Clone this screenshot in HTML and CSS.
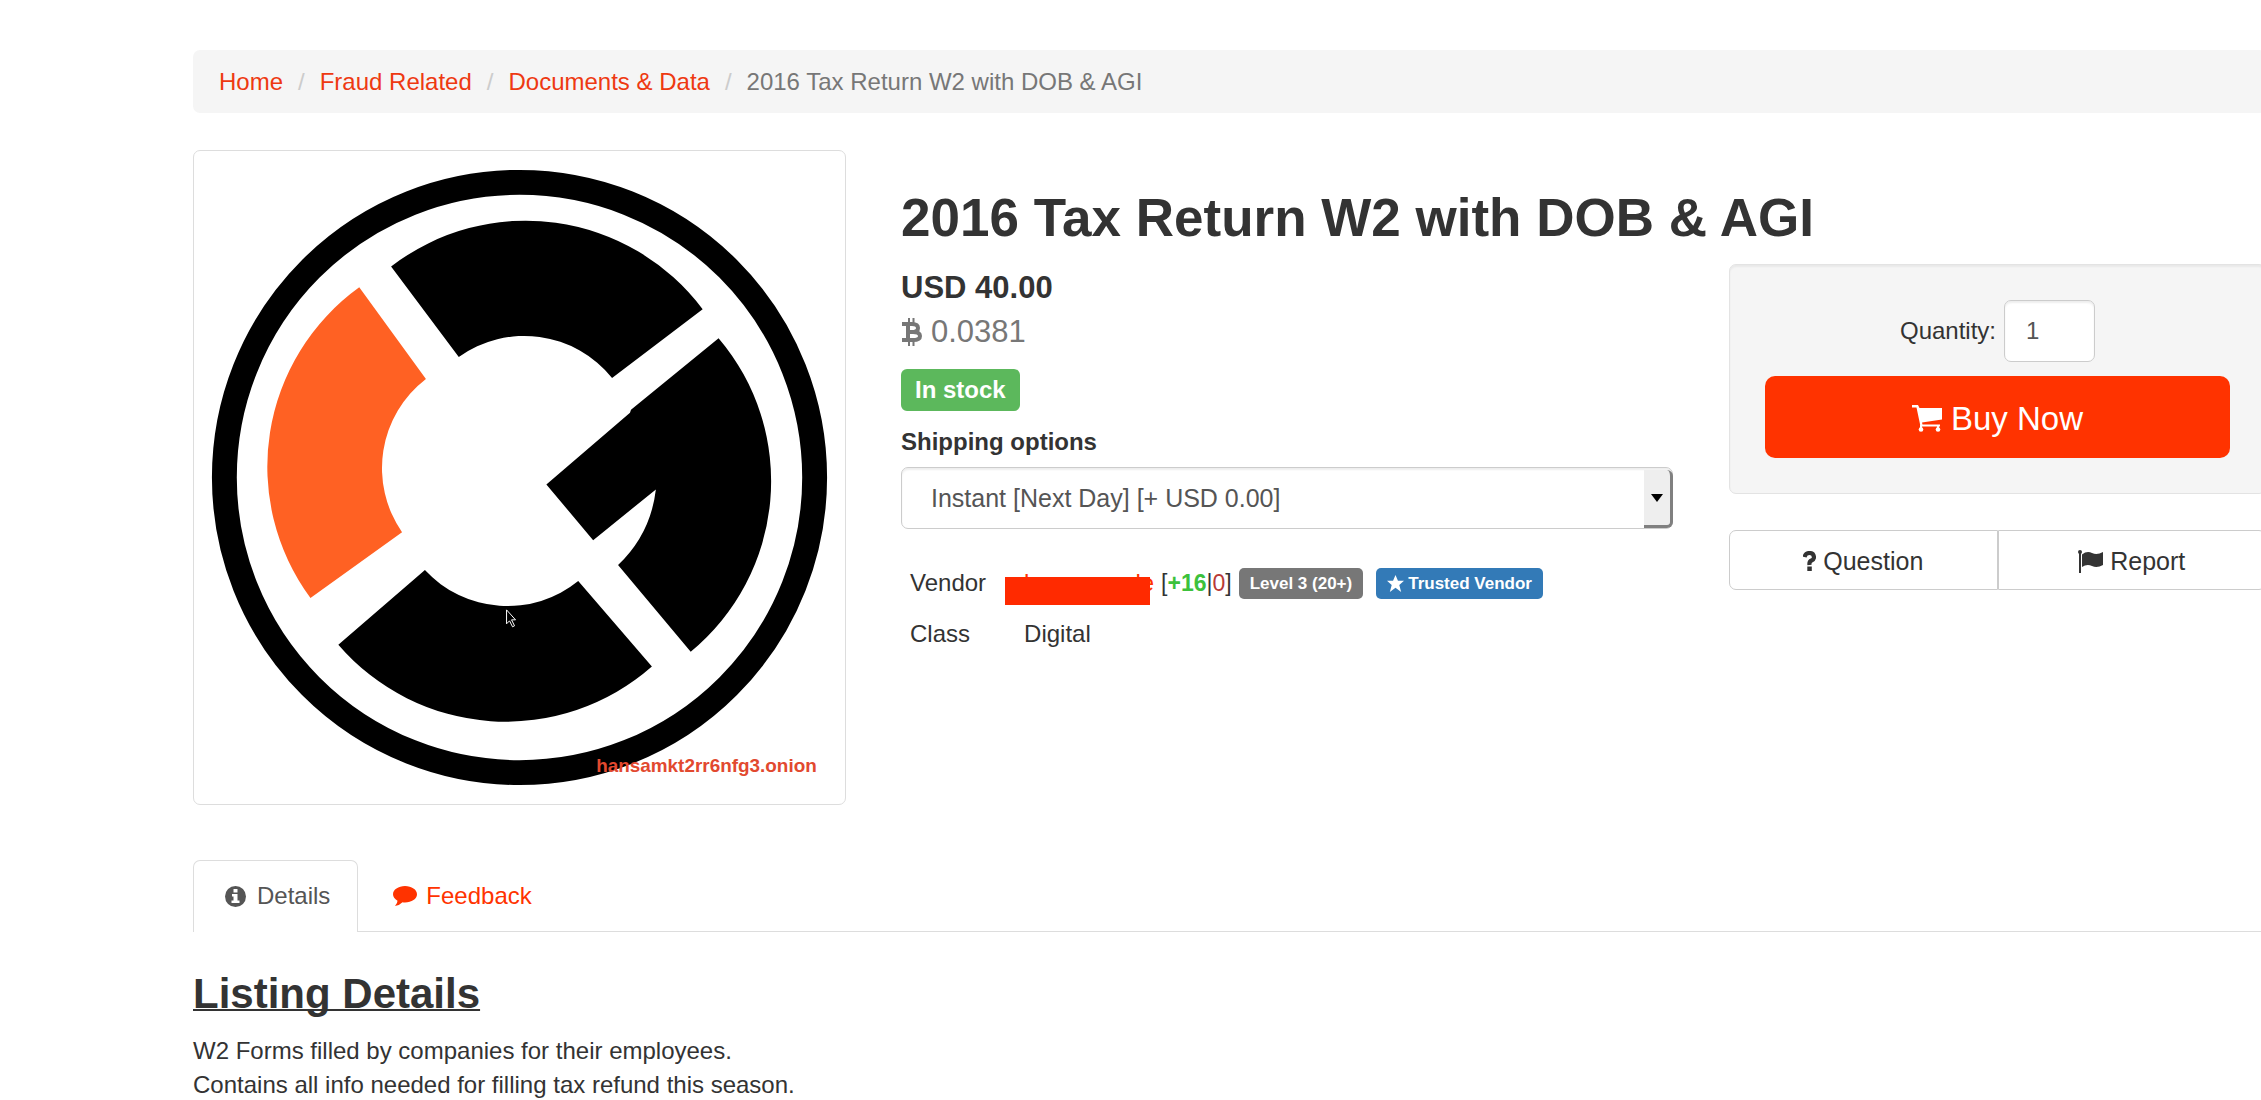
FILE: index.html
```html
<!DOCTYPE html>
<html lang="en">
<head>
<meta charset="utf-8">
<title>2016 Tax Return W2 with DOB &amp; AGI</title>
<link rel="stylesheet" href="styles.css">
</head>
<body>
<div class="container">
  <nav aria-label="Breadcrumb">
    <ol class="breadcrumb">
      <li><a href="#">Home</a></li>
      <li><a href="#">Fraud Related</a></li>
      <li><a href="#">Documents &amp; Data</a></li>
      <li class="current">2016 Tax Return W2 with DOB &amp; AGI</li>
    </ol>
  </nav>

  <main>
    <div class="product">
      <figure class="thumbnail">
        <svg viewBox="193 149 654 656" role="img" aria-label="Listing picture">
          <circle cx="520" cy="477" r="296.5" fill="none" stroke="#000" stroke-width="25"/>
          <path d="M391 265A222 222 0 0 1 704 308L613 377A113 113 0 0 0 459 356Z"/>
          <path d="M720 337L632 409L631 412L547 484L594 540L657 489A125 125 0 0 1 619 565L692 652A222 222 0 0 0 720 337Z"/>
          <path d="M425 570A113 113 0 0 0 579 581L653 667A222 222 0 0 1 338 645Z"/>
          <path fill="#ff6123" d="M359 286L426 378A113 113 0 0 0 402 532L310 598A222 222 0 0 1 359 286Z"/>
          <text x="597" y="773" class="watermark">hansamkt2rr6nfg3.onion</text>
          <path d="M507 610V624L510 621L513 627L515 626L512 620H516Z" stroke="#fff" stroke-width="1"/>
        </svg>
      </figure>

      <section class="info">
        <h1>2016 Tax Return W2 with DOB &amp; AGI</h1>
        <div class="offer">
          <div class="summary">
            <p class="price">USD 40.00</p>
            <p class="btc">
              <svg viewBox="0 0 21 28" width="21" height="28" aria-hidden="true"><path fill="none" stroke="currentColor" stroke-width="4" d="M1 6H11Q17 6 17 10T11 14H6H12Q19 14 19 18T12 22H1M7 6V22"/><path fill="none" stroke="currentColor" stroke-width="2" d="M8 0V5M12.500 0V5M8 23V28M12.500 23V28"/></svg>
              0.0381
            </p>
            <span class="stock">In stock</span>
            <label class="field-label" for="shipping">Shipping options</label>
            <div class="select">
              <select id="shipping"><option>Instant [Next Day] [+ USD 0.00]</option></select>
              <span class="caret" aria-hidden="true"></span>
            </div>
            <table class="facts">
              <tr>
                <th scope="row">Vendor</th>
                <td>
                  <div class="vendor">
                    <a class="name" href="#" aria-label="Vendor profile"><span>l</span><span>le</span></a>
                    <span class="rating">[<b>+16</b>|<i>0</i>]</span>
                    <span class="badge">Level 3 (20+)</span>
                    <span class="badge trusted"><svg viewBox="0 0 18 18" width="17" height="17" aria-hidden="true"><path fill="currentColor" d="M9 0L11.600 6H18L13 10.500L15 18L9 13.500L3 18L5 10.500L0 6H6.400Z"/></svg>Trusted Vendor</span>
                  </div>
                </td>
              </tr>
              <tr><th scope="row">Class</th><td>Digital</td></tr>
            </table>
          </div>

          <aside>
            <form class="well">
              <div class="quantity">
                <label for="quantity">Quantity:</label>
                <input id="quantity" type="text" value="1">
              </div>
              <button class="buy" type="button">
                <svg viewBox="0 0 30 27" width="30" height="27" aria-hidden="true"><path fill="currentColor" d="M0 0H6L7.500 3H30V14.500L10 17.500L10.500 19.500H28V21.500H8.500L4.500 2.500H0Z"/><path stroke="currentColor" stroke-width="2" d="M9 20V24M26 20V24"/><circle cx="9" cy="24.500" r="2.300" fill="currentColor"/><circle cx="26" cy="24.500" r="2.300" fill="currentColor"/></svg>
                Buy Now
              </button>
            </form>
            <div class="actions">
              <button type="button">
                <svg viewBox="0 0 13 20" width="13" height="20" aria-hidden="true"><path fill="none" stroke="currentColor" stroke-width="4.200" d="M1.500 6Q2.500 2 6.500 2T11 6Q11 8.500 8.500 9.500T6.500 14"/><path fill="currentColor" d="M4.300 15.500H8.800V20H4.300Z"/></svg>
                Question
              </button>
              <button type="button">
                <svg viewBox="0 0 25 23" width="25" height="23" aria-hidden="true"><circle cx="2" cy="2" r="2" fill="currentColor"/><path fill="currentColor" d="M1 2H3V23H1ZM4 4.500Q9 .5 14 3Q19 5.500 25 2V15Q19 18.500 14 16Q9 13.500 4 17Z"/></svg>
                Report
              </button>
            </div>
          </aside>
        </div>
      </section>
    </div>

    <nav class="tabs" aria-label="Listing">
      <a class="active" href="#details"><svg viewBox="0 0 21 21" width="21" height="21" aria-hidden="true"><circle cx="10.500" cy="10.500" r="10.500" fill="currentColor"/><path fill="#fff" d="M8.500 3H12.500V6.500H8.500ZM7 8H12.500V14.500H14.500V17H6.500V14.500H8.500V10.500H7Z"/></svg>Details</a>
      <a href="#feedback"><svg viewBox="0 0 24 21" width="24" height="21" aria-hidden="true"><path fill="currentColor" d="M12 1C18.600 1 24 4.600 24 9.300S18.600 17.500 12 17.500Q10.500 17.500 9.500 17.300Q6.500 20.500 2 21Q4.500 18.500 4.500 15.800Q0 13.200 0 9.300C0 4.600 5.400 1 12 1Z"/></svg>Feedback</a>
    </nav>

    <section id="details" class="details">
      <h2>Listing Details</h2>
      <p>W2 Forms filled by companies for their employees.<br>Contains all info needed for filling tax refund this season.</p>
    </section>
  </main>
</div>
</body>
</html>
```
FILE: styles.css
```css
* { box-sizing: border-box; }

html { overflow: hidden; }

body {
  margin: 0;
  overflow-x: clip;
  background: #fff;
  color: #333;
  font: 24px/34px "Liberation Sans", Arial, sans-serif;
}

h1, h2, p, figure { margin: 0; }
a { color: #ff3300; text-decoration: none; }
button, input, select { font: inherit; color: inherit; }

/* The content column runs slightly past the right edge of the window. */
.container { margin: 50px -5px 0 193px; }

.breadcrumb {
  display: flex;
  margin: 0 0 37px;
  padding: 15px 26px 14px;
  border-radius: 7px;
  background: #f5f5f5;
  list-style: none;
}
.breadcrumb a { color: #ee3911; }
.breadcrumb li + li::before { content: "/"; margin: 0 15px; color: #ccc; }
.breadcrumb .current { color: #777; }

.product {
  display: grid;
  grid-template-columns: 653fr 1365fr;
  gap: 55px;
  align-items: start;
}

.thumbnail { border: 1px solid #ddd; border-radius: 7px; }
.thumbnail svg { display: block; width: 100%; }
.watermark { font-size: 19px; font-weight: bold; fill: #e2492f; }

.info { padding-top: 38px; }
h1 { font-size: 53px; line-height: 60px; }

.offer {
  display: grid;
  grid-template-columns: 772fr 537fr;
  gap: 56px;
  align-items: start;
  padding-top: 16px;
}

.price { padding-top: 2px; font-size: 31px; line-height: 44px; font-weight: bold; }
.btc {
  display: flex;
  align-items: center;
  gap: 9px;
  color: #777;
  font-size: 31px;
  line-height: 44px;
}
.stock {
  display: block;
  width: fit-content;
  margin-top: 15px;
  padding: 4px 14px;
  border-radius: 6px;
  background: #5cb85c;
  color: #fff;
  font-weight: bold;
}
.field-label { display: block; margin: 14px 0 8px; font-weight: bold; }

.select { position: relative; }
.select select {
  display: block;
  width: 100%;
  height: 62px;
  padding: 0 60px 0 29px;
  appearance: none;
  border: 1px solid #ccc;
  border-radius: 7px;
  background: #fff;
  box-shadow: inset 0 2px 2px rgba(0, 0, 0, .07);
  color: #555;
  font-size: 25px;
}
.caret {
  position: absolute;
  inset: 3px 0 1px auto;
  display: grid;
  place-items: center;
  width: 29px;
  border: solid #808080;
  border-width: 0 3px 3px 0;
  border-radius: 0 6px 6px 0;
  background: #eee;
  pointer-events: none;
}
.caret::before {
  content: "";
  border: solid transparent;
  border-width: 8px 6px 0;
  border-top-color: #000;
}

.facts { margin-top: 28px; border-collapse: collapse; }
.facts th, .facts td { padding: 9px 9px 8px; text-align: left; font-weight: normal; }
.facts th { padding-right: 29px; }
.vendor { display: flex; align-items: center; }
.name {
  position: relative;
  display: flex;
  justify-content: space-between;
  width: 130px;
}
.name::after {
  content: "";
  position: absolute;
  inset: 11px 4px -5px -19px;
  background: #ff2a00;
}
.rating { margin: 0 7px; font-size: 23px; }
.rating b { color: #3cc13c; }
.rating i { color: #b93a36; font-style: normal; }
.badge {
  display: flex;
  align-items: center;
  gap: 4px;
  padding: 0 11px;
  border-radius: 5px;
  background: #777;
  color: #fff;
  font-size: 17px;
  line-height: 31px;
  font-weight: bold;
}
.trusted { margin-left: 13px; background: #337ab7; }

.well {
  padding: 35px;
  border: 1px solid #e3e3e3;
  border-radius: 7px;
  background: #f5f5f5;
  box-shadow: inset 0 2px 2px rgba(0, 0, 0, .05);
}
.quantity {
  display: flex;
  justify-content: center;
  align-items: center;
  gap: 8px;
  margin-bottom: 14px;
}
.quantity input {
  width: 91px;
  height: 62px;
  padding: 0 21px;
  border: 1px solid #ccc;
  border-radius: 7px;
  background: #fff;
  box-shadow: inset 0 2px 2px rgba(0, 0, 0, .07);
  color: #555;
}
.buy, .actions button {
  display: flex;
  justify-content: center;
  align-items: center;
}
.buy {
  gap: 9px;
  width: 100%;
  height: 82px;
  padding-top: 4px;
  border: 0;
  border-radius: 10px;
  background: #ff3300;
  color: #fff;
  font-size: 33px;
}
.actions { display: grid; grid-template-columns: 1fr 1fr; margin-top: 36px; }
.actions button {
  gap: 7px;
  height: 60px;
  padding-top: 3px;
  border: 1px solid #ccc;
  border-radius: 7px 0 0 7px;
  background: #fff;
  font-size: 25px;
}
.actions button + button { border-radius: 0 7px 7px 0; }

.tabs { display: flex; margin-top: 55px; border-bottom: 1px solid #ddd; }
.tabs a {
  display: flex;
  align-items: center;
  gap: 9px;
  padding: 18px 30px;
  border: 1px solid transparent;
  border-bottom: 0;
  border-radius: 7px 7px 0 0;
}
.tabs .active {
  gap: 11px;
  margin: 0 4px -1px 0;
  padding: 18px 27px 18px 31px;
  border-color: #ddd;
  background: #fff;
  color: #555;
}

.details { padding-top: 38px; }
h2 {
  margin-bottom: 16px;
  font-size: 42px;
  line-height: 48px;
  text-decoration: underline 2px;
  text-decoration-skip-ink: none;
}
```
